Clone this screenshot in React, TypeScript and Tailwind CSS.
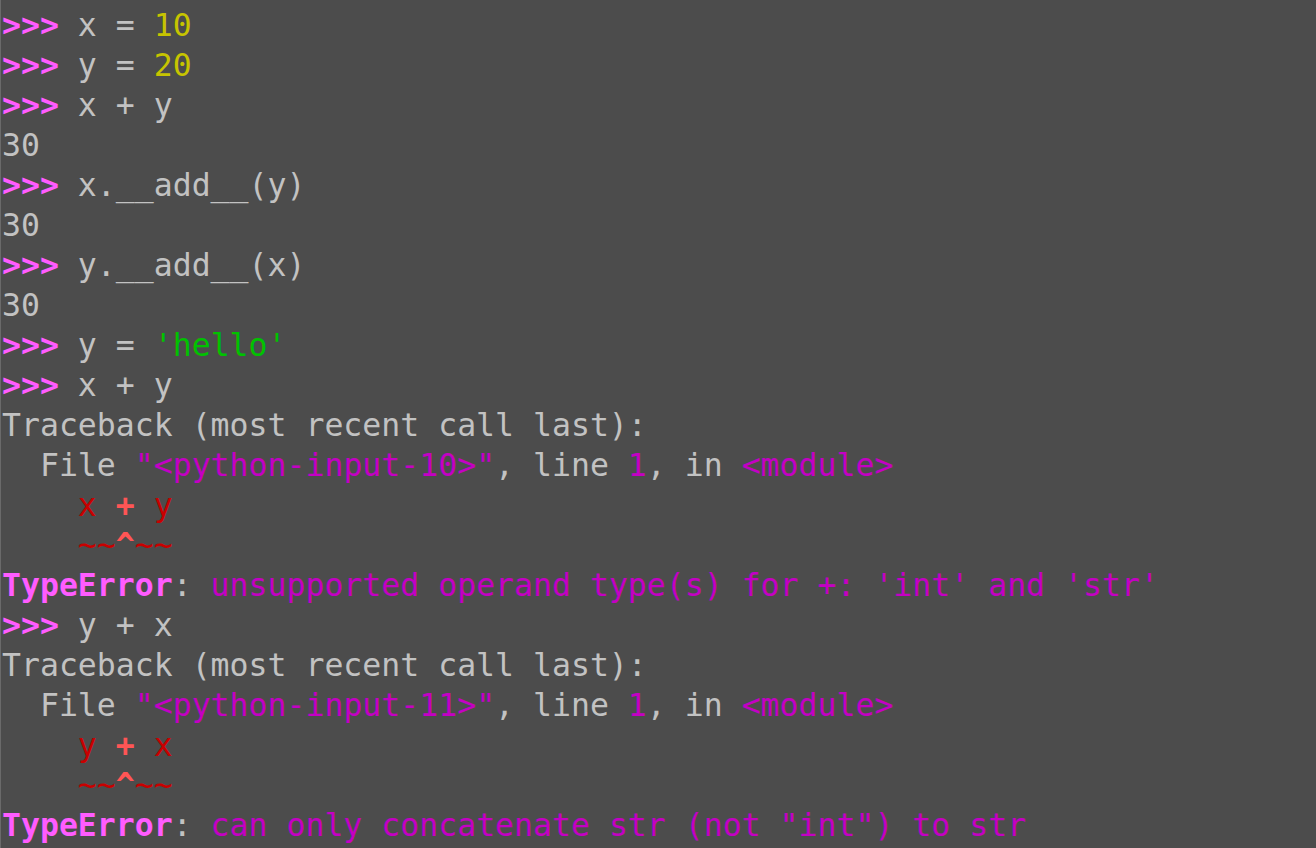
import React from "react";

type Seg = [string, string?];

const P = "text-[#ff5cff] font-bold";
const Y = "text-[#c7c400]";
const G = "text-[#00c200]";
const M = "text-[#c400c4]";
const R = "text-[#c80000]";
const BR = "text-[#ff5555] font-bold";
const BM = "text-[#ff5cff] font-bold";

const lines: Seg[][] = [
  [[">>>", P], [" x = "], ["10", Y]],
  [[">>>", P], [" y = "], ["20", Y]],
  [[">>>", P], [" x + y"]],
  [["30"]],
  [[">>>", P], [" x.__add__(y)"]],
  [["30"]],
  [[">>>", P], [" y.__add__(x)"]],
  [["30"]],
  [[">>>", P], [" y = "], ["'hello'", G]],
  [[">>>", P], [" x + y"]],
  [["Traceback (most recent call last):"]],
  [["  File "], ['"<python-input-10>"', M], [", line "], ["1", M], [", in "], ["<module>", M]],
  [["    "], ["x", R], [" "], ["+", BR], [" "], ["y", R]],
  [["    "], ["~~", R], ["^", BR], ["~~", R]],
  [["TypeError", BM], [":"], [" unsupported operand type(s) for +: 'int' and 'str'", M]],
  [[">>>", P], [" y + x"]],
  [["Traceback (most recent call last):"]],
  [["  File "], ['"<python-input-11>"', M], [", line "], ["1", M], [", in "], ["<module>", M]],
  [["    "], ["y", R], [" "], ["+", BR], [" "], ["x", R]],
  [["    "], ["~~", R], ["^", BR], ["~~", R]],
  [["TypeError", BM], [":"], [" can only concatenate str (not \"int\") to str", M]],
];

export default function App() {
  return (
    <div className="w-[1316px] h-[848px] bg-[#4c4c4c] overflow-hidden flex">
      <div className="w-px h-full bg-[#6a6a6a]" />
      <div
        className="pl-px pt-[5px] text-[#c2c2c2] text-[31.5px] leading-[40px] whitespace-pre"
        style={{ fontFamily: '"DejaVu Sans Mono", monospace' }}
      >
        {lines.map((segs, i) => (
          <div key={i} className="h-[40px]">
            {segs.map(([t, c], j) => (
              <span key={j} className={c}>
                {t}
              </span>
            ))}
          </div>
        ))}
      </div>
    </div>
  );
}
